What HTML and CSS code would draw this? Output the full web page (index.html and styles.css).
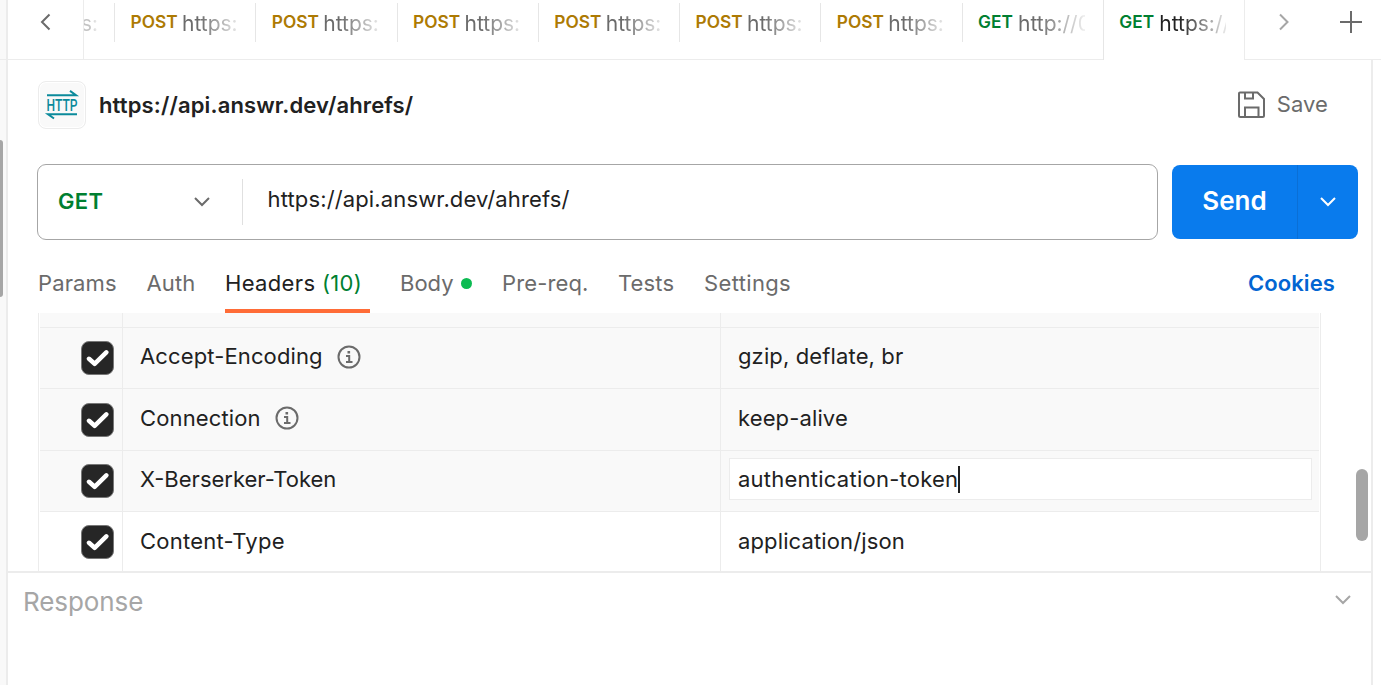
FILE: index.html
```html
<!DOCTYPE html>
<html lang="en">
<head>
<meta charset="utf-8">
<title>API request</title>
<link rel="stylesheet" href="styles.css">
</head>
<body>
<div class="app">
  <aside class="gutter"><div class="gutter-top"></div><div class="gutter-thumb"></div></aside>
  <div class="workspace">
    <nav class="tabs">
      <button class="nav-prev"><svg width="12" height="18" viewBox="0 0 12 18"><path d="M10.500 1.500 3 9l7.500 7.500"/></svg></button>
      <div class="tab-strip">
        <div class="tab partial"><span class="tab-url">s:</span></div>
        <div class="tab"><b class="post">POST</b><span class="tab-url">https:</span></div>
        <div class="tab"><b class="post">POST</b><span class="tab-url">https:</span></div>
        <div class="tab"><b class="post">POST</b><span class="tab-url">https:</span></div>
        <div class="tab"><b class="post">POST</b><span class="tab-url">https:</span></div>
        <div class="tab"><b class="post">POST</b><span class="tab-url">https:</span></div>
        <div class="tab"><b class="post">POST</b><span class="tab-url">https:</span></div>
        <div class="tab"><b class="get">GET</b><span class="tab-url">http://0</span></div>
        <div class="tab active"><b class="get">GET</b><span class="tab-url">https://</span></div>
      </div>
      <div class="tab-actions">
        <svg class="next" width="12" height="18" viewBox="0 0 12 18"><path d="M2 1.500 9.500 9 2 16.500"/></svg>
        <svg class="plus" width="24" height="24" viewBox="0 0 24 24"><path d="M12 1v22M1 12h22"/></svg>
      </div>
    </nav>
    <main class="panel">
      <header class="title-row">
        <div class="http-badge">
          <svg width="32" height="32" viewBox="0 0 32 32">
            <path d="M1 6.200H30L24 1.900M31 25.200H2l6 4.300" fill="none" stroke="#0b8a9b" stroke-width="2"/>
            <text x="0.500" y="21.700" textLength="31" lengthAdjust="spacingAndGlyphs">HTTP</text>
          </svg>
        </div>
        <h1>https://api.answr.dev/ahrefs/</h1>
        <div class="save">
          <svg width="28" height="28" viewBox="0 0 28 28"><path d="M2 1.500h17.500l6.500 6.500v16.500a1.500 1.500 0 0 1-1.500 1.500H2.500A1.500 1.500 0 0 1 1 24.500V2.500A1 1 0 0 1 2 1.500zM7 1.500V7.500h8V1.500M7 26V16.500h13.500V26"/></svg>
          <span>Save</span>
        </div>
      </header>
      <section class="request-row">
        <div class="url-box">
          <div class="method"><span>GET</span><svg width="18" height="12" viewBox="0 0 18 12"><path d="M2 2l7 7 7-7"/></svg></div>
          <div class="url">https://api.answr.dev/ahrefs/</div>
        </div>
        <div class="send">
          <span class="send-label">Send</span>
          <span class="send-menu"><svg width="18" height="12" viewBox="0 0 18 12"><path d="M2 2l7 7 7-7"/></svg></span>
        </div>
      </section>
      <section class="subtabs">
        <span class="st params">Params</span>
        <span class="st auth">Auth</span>
        <span class="st headers on">Headers <i>(10)</i></span>
        <span class="st bodytab">Body<em></em></span>
        <span class="st prereq">Pre-req.</span>
        <span class="st tests">Tests</span>
        <span class="st settings">Settings</span>
        <a class="cookies">Cookies</a>
      </section>
      <section class="table">
        <div class="row cut"><div class="c-check"></div><div class="c-key"></div><div class="c-val"></div></div>
        <div class="row">
          <div class="c-check"><span class="box"><svg width="24" height="20" viewBox="0 0 24 20"><path d="M3 10.800 8.600 15.800 20.300 4.300"/></svg></span></div>
          <div class="c-key"><span class="k1">Accept-Encoding</span><svg class="info" width="24" height="24" viewBox="0 0 24 24"><circle cx="12" cy="12" r="10.500"/><path d="M9 11h3.200v6M9 17h6.500"/><rect x="10.500" y="6" width="2.600" height="2.500"/></svg></div>
          <div class="c-val"><span class="v1">gzip, deflate, br</span></div>
        </div>
        <div class="row tall">
          <div class="c-check"><span class="box"><svg width="24" height="20" viewBox="0 0 24 20"><path d="M3 10.800 8.600 15.800 20.300 4.300"/></svg></span></div>
          <div class="c-key"><span class="k2">Connection</span><svg class="info" width="24" height="24" viewBox="0 0 24 24"><circle cx="12" cy="12" r="10.500"/><path d="M9 11h3.200v6M9 17h6.500"/><rect x="10.500" y="6" width="2.600" height="2.500"/></svg></div>
          <div class="c-val"><span class="v2">keep-alive</span></div>
        </div>
        <div class="row">
          <div class="c-check"><span class="box"><svg width="24" height="20" viewBox="0 0 24 20"><path d="M3 10.800 8.600 15.800 20.300 4.300"/></svg></span></div>
          <div class="c-key"><span class="k3">X-Berserker-Token</span></div>
          <div class="c-val editing"><div class="editor"><span class="v3">authentication-token</span><i class="caret"></i></div></div>
        </div>
        <div class="row last">
          <div class="c-check"><span class="box"><svg width="24" height="20" viewBox="0 0 24 20"><path d="M3 10.800 8.600 15.800 20.300 4.300"/></svg></span></div>
          <div class="c-key"><span class="k4">Content-Type</span></div>
          <div class="c-val"><span class="v4">application/json</span></div>
        </div>
      </section>
      <div class="scroll-thumb"></div>
      <footer class="response"><span>Response</span><svg width="18" height="12" viewBox="0 0 18 12"><path d="M2 2l7 7 7-7"/></svg></footer>
    </main>
  </div>
</div>
</body>
</html>
```
FILE: styles.css
```css
* { box-sizing: border-box; }
body { margin: 0; font-family: Inter, "Liberation Sans", sans-serif; font-size: 22px; color: #212121; background: #fff; overflow: hidden; }
svg { display: block; fill: none; stroke: #6b6b6b; stroke-width: 2; flex: none; }
button { border: 0; background: none; padding: 0; }
i, em { font-style: normal; }
.app { display: flex; width: 1381px; height: 685px; white-space: nowrap; }
.gutter { width: 8px; background: #f9f9f9; border-right: 2px solid #ececec; flex: none; }
.gutter-top { height: 60px; border-bottom: 1px solid #ececec; }
.gutter-thumb { margin-top: 80px; width: 3px; height: 157px; background: #a6a6a6; border-radius: 0 4px 4px 0; }
.workspace { width: 1373px; display: flex; flex-direction: column; }

.tabs { display: flex; height: 60px; flex: none; }
.nav-prev { width: 76px; border-right: 1px solid #ececec; border-bottom: 1px solid #ececec; padding: 0 0 15px 31px; }
.tab-strip { display: flex; width: 1161px; }
.tab { width: 141.25px; flex: none; display: flex; position: relative; padding-left: 16.500px; border-bottom: 1px solid #ececec; overflow: hidden; height: 60px; }
.tab::before { content: ""; position: absolute; left: 0; top: 3px; height: 39px; width: 1px; background: #e6e6e6; }
.tab.partial { width: 30px; padding-left: 0; }
.tab.partial::before { display: none; }
.tab.active { width: 142px; border-bottom: 0; border-right: 1px solid #ececec; }
.tab.active::before { top: 0; height: 60px; }
.tab b { font-size: 17.3px; font-weight: 600; line-height: 22px; margin-top: 11px; width: 51.500px; }
.tab b.get { width: 40px; }
.post { color: #ad7a03; }
.get { color: #007f31; }
.tab-url { font-size: 21px; line-height: 26px; margin-top: 11px; width: 58px; overflow: hidden; color: #6b6b6b; -webkit-mask-image: linear-gradient(90deg, #000 30%, transparent 108%); mask-image: linear-gradient(90deg, #000 30%, transparent 108%); }
.get + .tab-url { width: 67px; }
.partial .tab-url { width: 16px; opacity: .4; text-indent: -3px; }
.active .tab-url { color: #212121; }
.tab-actions { flex: 1; border-bottom: 1px solid #ececec; display: flex; align-items: center; padding: 0 0 15px 33px; gap: 48.500px; }
.next { stroke: #a6a6a6; }

.panel { width: 1365px; height: 625px; border-right: 2px solid #ececec; position: relative; display: flex; flex-direction: column; }
.title-row { height: 104px; display: flex; align-items: center; padding: 0 43px 14px 30px; }
.http-badge { width: 48px; height: 48px; border: 1px solid #ececec; border-radius: 8px; background: #f9f9f9; box-shadow: inset 0 0 0 1px #fff; display: flex; align-items: center; justify-content: center; }
.http-badge svg { overflow: visible; }
.http-badge text { font: 500 17px Roboto, sans-serif; fill: #0b8a9b; stroke: none; }
h1 { margin: 0 0 0 13px; font-size: 22px; font-weight: 600; letter-spacing: .14px; }
.save { margin-left: auto; display: flex; align-items: center; gap: 11px; color: #6b6b6b; }
.save span { padding-bottom: 2px; letter-spacing: .1px; }
.request-row { display: flex; height: 76px; padding-left: 29px; gap: 14px; align-items: center; }
.url-box { width: 1121px; height: 76px; border: 1px solid #a6a6a6; border-radius: 9px; display: flex; align-items: center; }
.method { width: 205px; height: 46px; border-right: 1px solid #e0e0e0; display: flex; align-items: center; justify-content: space-between; padding: 0 31.500px 1px 20px; color: #007f31; font-weight: 600; letter-spacing: .3px; }
.method span { padding-bottom: 2px; }
.url { padding: 0 0 7px 24.500px; letter-spacing: .14px; }
.send { width: 186px; height: 74px; border-radius: 8px; background: #097bed; color: #fff; display: flex; }
.send svg { stroke: #fff; }
.send-label { width: 126px; border-right: 1px solid #0a6fd6; display: flex; align-items: center; justify-content: center; font-weight: 600; font-size: 26px; padding-bottom: 4px; }
.send-menu { flex: 1; display: flex; align-items: center; justify-content: center; }

.subtabs { height: 73px; display: flex; align-items: flex-end; padding: 0 36px 0 30px; color: #6b6b6b; }
.st { height: 50px; line-height: 40px; letter-spacing: .12px; }
.params { width: 108.500px; }
.auth { width: 78.500px; }
.headers { width: 145px; border-bottom: 4px solid #ff6c37; color: #212121; letter-spacing: .35px; }
.headers i { color: #007f31; }
.bodytab { width: 102px; margin-left: 30px; display: flex; letter-spacing: 0; }
.bodytab em { width: 11px; height: 11px; border-radius: 50%; background: #0cbb52; margin: 15px 0 0 7px; }
.prereq { width: 116px; }
.tests { width: 86px; }
.settings { letter-spacing: .35px; }
.cookies { margin-left: auto; height: 50px; line-height: 40px; color: #0265d2; font-weight: 600; letter-spacing: .1px; }

.table { width: 1283px; margin-left: 30px; height: 258px; border: solid #ececec; border-width: 0 1px; padding: 0 1px; overflow: hidden; flex: none; }
.row { height: 61px; display: grid; grid-template-columns: 83px 598px 1fr; border-bottom: 1px solid #ececec; background: #f9f9f9; }
.row.cut { height: 15px; }
.row.tall { height: 62px; }
.row.last { background: #fff; height: 62px; }
.c-check { border-right: 1px solid #ececec; padding: 13px 0 0 41px; }
.row.tall .c-check { padding-top: 14px; }
.c-key { border-right: 1px solid #ececec; display: flex; align-items: center; padding: 0 0 5px 17px; }
.c-val { display: flex; align-items: center; padding: 0 0 5px 17px; }
.row.tall .c-key, .row.tall .c-val, .row.last .c-key, .row.last .c-val { padding-bottom: 3px; }
.row.cut div { padding: 0; }
.k1, .k2, .v1, .v2, .v4 { letter-spacing: .13px; }
.v3, .k4 { letter-spacing: .24px; }
.box { width: 33px; height: 34px; border-radius: 8px; background: #262626; border: 1px solid #777; display: flex; align-items: center; justify-content: center; }
.box svg { stroke: #fff; stroke-width: 4.500; stroke-linecap: round; stroke-linejoin: round; }
.info { margin: 2px 0 0 14px; }
.row.tall .info { margin-top: 0; }
.info rect { fill: #6b6b6b; stroke: none; }
.c-val.editing { padding: 7px 7px 0 8px; align-items: flex-start; }
.editor { width: 100%; height: 42px; background: #fff; border: 1px solid #ececec; padding-left: 8px; display: flex; align-items: center; }
.caret { width: 2px; height: 27px; background: #212121; }
.scroll-thumb { position: absolute; left: 1348px; top: 409px; width: 12px; height: 72px; border-radius: 6px; background: #a6a6a6; }
.response { border-top: 2px solid #ececec; height: 114px; display: flex; justify-content: space-between; align-items: flex-start; padding: 13px 19px 0 15px; color: #a6a6a6; font-size: 26px; line-height: 31px; letter-spacing: -.08px; }
.response svg { stroke: #a6a6a6; margin-top: 8px; }
```
